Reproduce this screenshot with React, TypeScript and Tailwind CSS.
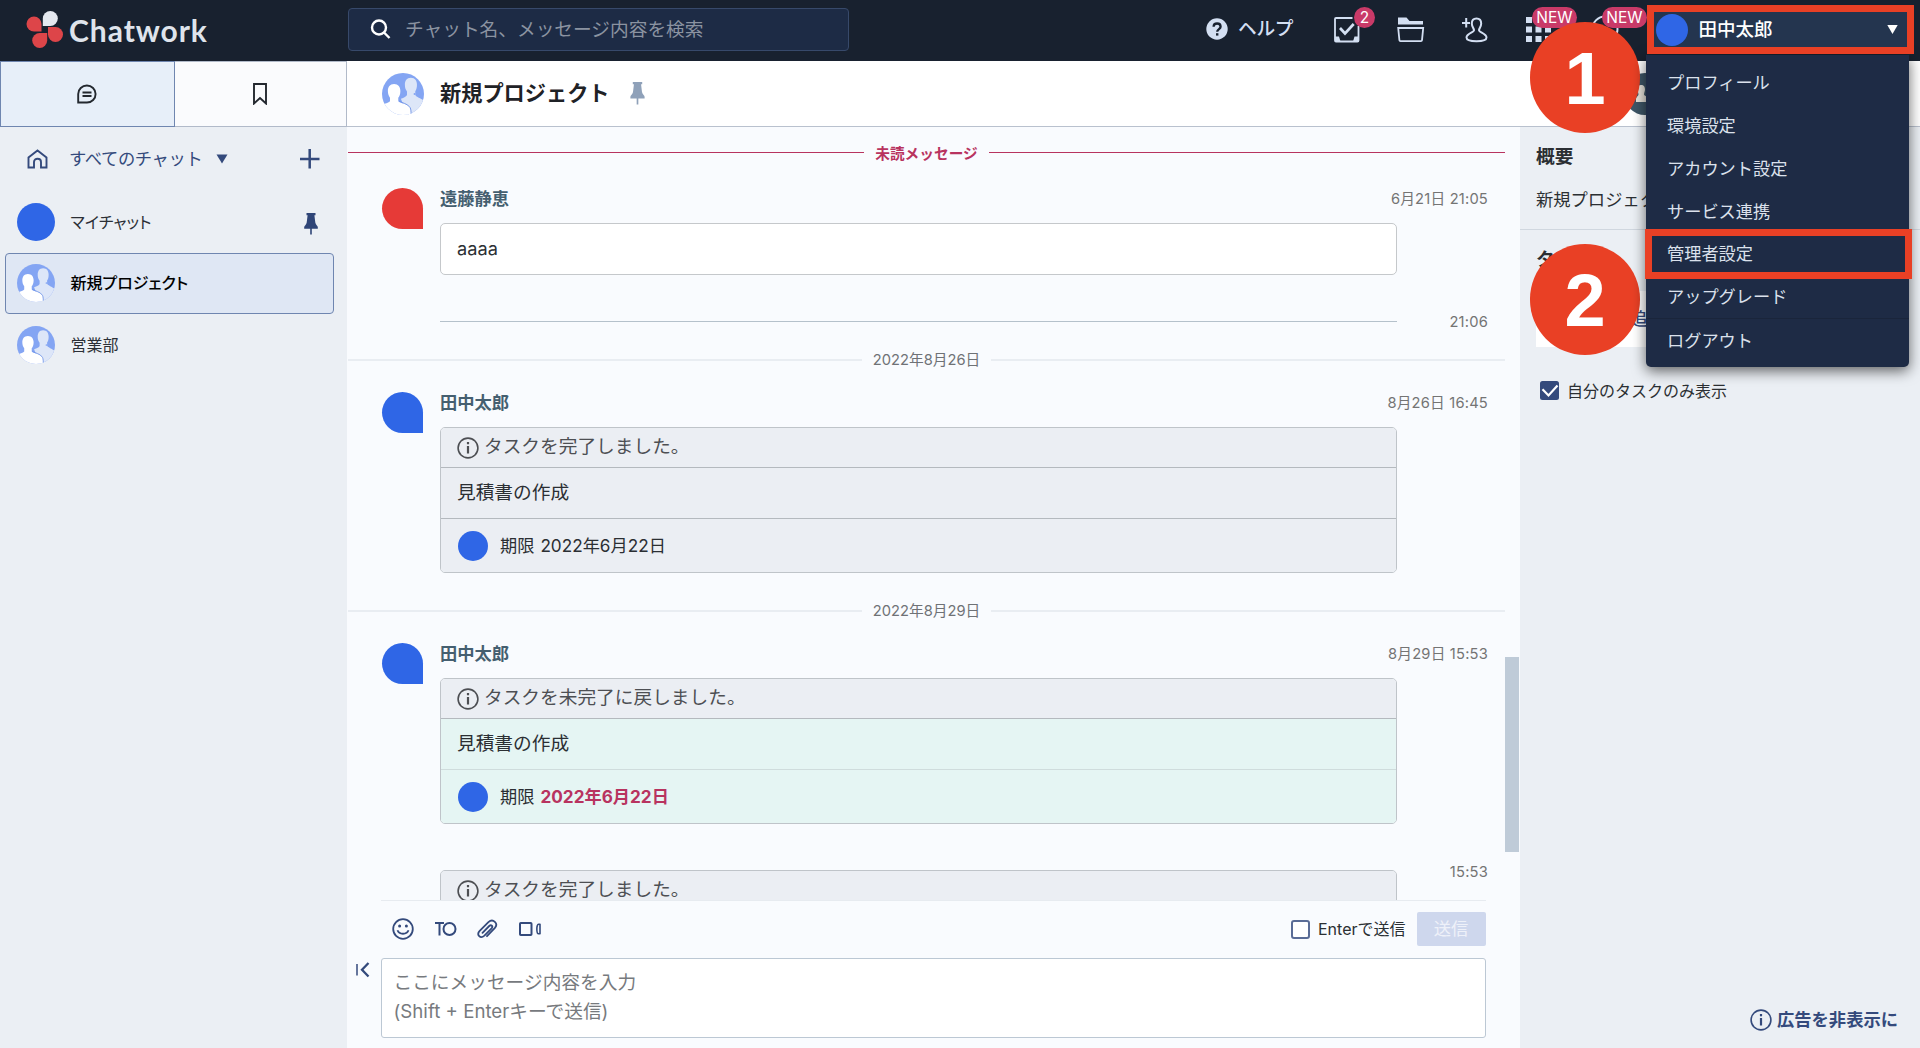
import type { ReactNode } from "react";
import clsx from "clsx";

const menuItems = [
  "プロフィール",
  "環境設定",
  "アカウント設定",
  "サービス連携",
  "管理者設定",
  "アップグレード",
];

const rooms = [
  { id: 1, name: "マイチャット", self: true, pinned: true, active: false },
  { id: 2, name: "新規プロジェクト", self: false, pinned: false, active: true },
  { id: 3, name: "営業部", self: false, pinned: false, active: false },
];

function Logo() {
  // one leaf is a circle with its lower left corner squared off
  const leaf = "M0 15V7.5A7.5 7.5 0 1 1 7.5 15Z";
  return (
    <svg width="38" height="40" viewBox="26 10 38 40">
      <path d={leaf} fill="#e4e8ef" transform="translate(42.8 11)" />
      <path d={leaf} fill="#dd4549" transform="translate(41.5 16.5) scale(-1 1)" />
      <path d={leaf} fill="#dd4549" transform="translate(47.2 48) rotate(180)" />
      <path d={leaf} fill="#dd4549" transform="translate(48 42) scale(1 -1)" />
    </svg>
  );
}

function GroupAvatar({ className }: { className?: string }) {
  return (
    <svg viewBox="0 0 40 40" className={clsx("shrink-0 rounded-full", className)}>
      <rect width="40" height="40" fill="#84a5f3" />
      <path
        d="M27.500 4.500c4 0 5.800 3 5.800 6.700c0 3-.6 4.600-1.600 6.200v3.500c1 2 5 3 8.300 5.500V40H24L18 24.500c3-1 5.300-2 5.800-3.500v-3.500c-1.200-1.600-2-3.200-2-6.300c0-3.700 1.700-6.700 5.700-6.700Z"
        fill="#dde6f8"
      />
      <circle cx="31" cy="20" r="0.900" fill="#84a5f3" />
      <path
        d="M11.500 10.500c4 0 6 3 6 6.700c0 3-.8 5-2 6.300v3.300c1.400 2 9.300 2.600 11.300 6.200c.8 1.600.9 4 .9 7H0V30.500c2.500-1.600 6.500-2.200 7.600-3.700v-3.300c-1.200-1.500-2-3.500-2-6.300c0-3.700 1.900-6.700 5.900-6.700Z"
        fill="#fff"
      />
      <path
        d="M16.200 26.600c1.800 1.800 8.600 2.400 10.600 6.400c.8 1.600.9 4 .9 7"
        fill="none"
        stroke="#6f93e8"
        strokeWidth="0.9"
      />
    </svg>
  );
}

function PinIcon({ className }: { className?: string }) {
  return (
    <svg viewBox="0 0 14 22" className={className} fill="currentColor">
      <path d="M2.500 0h9v2.200h-1.100l.9 7.300c.3 2.200 2.500 3.300 2.500 4.600v1.600H7.800V21.500H6.200V15.700H.2v-1.600c0-1.300 2.200-2.400 2.500-4.600l.9-7.300H2.500Z" />
    </svg>
  );
}

function InfoIcon({ size = 22, className }: { size?: number; className?: string }) {
  return (
    <svg width={size} height={size} viewBox="0 0 22 22" className={className} fill="none" stroke="currentColor">
      <circle cx="11" cy="11" r="9.900" strokeWidth="1.600" />
      <path d="M11 9v7.500" strokeWidth="2.200" />
      <path d="M11 5v2.300" strokeWidth="2.200" />
    </svg>
  );
}

function NewBadge({ className }: { className?: string }) {
  return (
    <span
      className={clsx(
        "absolute flex h-[21px] w-[45px] items-center justify-center rounded-full bg-[#c93a68] text-[15.5px] text-white",
        className
      )}
    >
      NEW
    </span>
  );
}

function Header() {
  return (
    <header className="flex h-[61px] shrink-0 items-start bg-[#18212f] text-[#d3dff2]">
      <div className="flex w-[348px] items-start pl-[26px] pt-[10px]">
        <Logo />
        <span className="ml-[5px] mt-px font-[Lato] text-[30px] leading-[38px] font-bold tracking-[0.95px] text-[#dfe4ec]">
          Chatwork
        </span>
      </div>
      <div className="mt-2 flex h-[43px] w-[501px] items-center rounded-[4px] border-[1.5px] border-[#37496a] bg-[#1d2b45] pl-[21px]">
        <svg width="21" height="21" viewBox="0 0 21 21" fill="none" stroke="#fff" strokeWidth="2.400">
          <circle cx="9" cy="8.500" r="7" />
          <path d="m14 13.500 5.500 5.500" />
        </svg>
        <span className="ml-[14px] pt-px text-[18.7px] text-[#8b93a1]">チャット名、メッセージ内容を検索</span>
      </div>
      <nav className="relative ml-[357px] flex h-[61px] w-[430px]">
        <div className="flex h-[58px] w-[128px] items-center">
          <svg width="22" height="22" viewBox="0 0 22 22">
            <circle cx="11" cy="11" r="10.700" fill="#d3dff2" />
            <path d="M7.600 8.800c0-4.400 7-4.400 7 0c0 2.300-3.400 2.300-3.400 5" fill="none" stroke="#18212f" strokeWidth="2.300" />
            <path d="M10 15.200h2.400v2.400H10z" fill="#18212f" />
          </svg>
          <span className="ml-[10px] pt-px text-[18.7px] font-medium tracking-[-0.3px]">ヘルプ</span>
        </div>
        <svg className="mt-[17px]" width="26" height="26" viewBox="0 0 26 26" fill="none" stroke="currentColor" strokeWidth="1.800">
          <path d="M18.500 1H2q-1 0-1 1v21.500q0 1 1 1h21.500q1 0 1-1V9" />
          <path d="M1 19.500h4l1.500 5H1ZM24.500 19.500h-4l-1.500 5h5.500Z" fill="currentColor" stroke="none" />
          <path d="m6 11 5 5.500 8.700-9.500" strokeWidth="2.700" />
        </svg>
        <svg className="ml-[37px] mt-[17px]" width="28" height="26" viewBox="0 0 28 26" fill="none" stroke="currentColor" strokeWidth="1.800">
          <path d="M1 .5h8.500l3 3.500H26v3.500H1Z" fill="currentColor" stroke="none" />
          <path d="M1.200 11h25l-1.200 12.200q-.1 1-1.100 1H3.500q-1 0-1.100-1Z" />
        </svg>
        <svg className="ml-[37px] mt-[16px]" width="28" height="28" viewBox="0 0 28 28" fill="none" stroke="currentColor" strokeWidth="2">
          <path d="M0 7h8M4.200 2v9.500" />
          <path d="M14.500 2.500c3.200 0 4.700 2.300 4.700 5c0 2.800-1.700 4.500-2.200 6.500c-.6 2.200 7.500 3.200 7.500 7.500c0 2.800-4.500 3.800-10 3.800s-10-1-10-3.800c0-4.300 8.100-5.300 7.500-7.500c-.5-2-2.200-3.700-2.200-6.500c0-2.700 1.500-5 4.700-5Z" />
        </svg>
        <svg className="ml-[36px] mt-[17px]" width="26" height="26" viewBox="0 0 26 26" fill="currentColor">
          {[0, 9.5, 19].map((y) =>
            [0, 9.5, 19].map((x) => <rect key={`${x}-${y}`} x={x} y={y} width="6" height="6" />)
          )}
        </svg>
        <svg className="ml-[39px] mt-[15px]" width="28" height="28" viewBox="0 0 28 28" fill="none" stroke="currentColor" strokeWidth="2">
          <circle cx="14" cy="14" r="12.500" />
        </svg>
        <span className="absolute left-[148px] top-[7px] flex h-[21px] w-[21px] items-center justify-center rounded-full bg-[#c93a68] text-[15.500px] text-white">
          2
        </span>
        <NewBadge className="left-[326px] top-[7px]" />
        <NewBadge className="left-[396px] top-[7px]" />
      </nav>
    </header>
  );
}

function Sidebar() {
  return (
    <aside className="flex w-[347px] shrink-0 flex-col bg-[#ebeff4]">
      <div className="flex h-[65.500px]">
        <div className="flex w-[174.500px] items-center justify-center border-[1.5px] border-[#6f86b0] bg-[#e7eff9]">
          <svg width="20" height="20" viewBox="0 0 20 20" fill="none" stroke="#23282f" strokeWidth="1.900">
            <path d="M1.200 18.500V10A8.700 8.500 0 1 1 10 18.500Z" />
            <path d="M5.500 8.500h9M5.500 12h9" />
          </svg>
        </div>
        <div className="flex flex-1 items-center justify-center border-y-[1.5px] border-r-[1.5px] border-[#b1bac9] bg-[#fafbfd]">
          <svg width="14" height="22" viewBox="0 0 14 22" fill="none" stroke="#23282f" strokeWidth="1.900">
            <path d="M1 1h12v19.500l-6-5.500-6 5.500Z" />
          </svg>
        </div>
      </div>
      <div className="flex h-[64px] items-center pl-[27px] text-[#344a7c]">
        <svg width="21" height="20" viewBox="0 0 21 20" fill="none" stroke="currentColor" strokeWidth="1.900">
          <path d="M1.500 18.500V8.500l9-7 9 7v10h-5.500V13c0-4.300-7-4.300-7 0v5.500Z" />
        </svg>
        <span className="ml-[21px] w-[136px] text-[17.300px] tracking-[-0.35px] whitespace-nowrap">すべてのチャット</span>
        <svg className="ml-[11px]" width="12" height="10" viewBox="0 0 12 10" fill="currentColor">
          <path d="M.5.500h11L6 9.500Z" />
        </svg>
        <svg className="ml-[72px]" width="20" height="20" viewBox="0 0 20 20" stroke="currentColor" strokeWidth="2.500">
          <path d="M0 10h19.500M9.700 0v19.500" />
        </svg>
      </div>
      <ul className="pl-[5px] pt-[0.500px] text-[16px] text-[#2b2f36] [font-feature-settings:'palt']">
        {rooms.map((room) => (
          <li
            key={room.id}
            className={clsx(
              "flex h-[61.5px] w-[328.500px] items-center rounded-[4px] border-[1.5px] pl-[10.500px]",
              room.active ? "border-[#6f86b0] bg-[#dfe7f4] font-medium text-black" : "border-transparent"
            )}
          >
            {room.self ? (
              <span className="h-[38px] w-[38px] rounded-full bg-[#2f66e6]" />
            ) : (
              <GroupAvatar className="h-[38px] w-[38px]" />
            )}
            <span className="ml-4 flex-1">{room.name}</span>
            {room.pinned && <PinIcon className="mr-[15px] mt-1 h-[22px] w-[14px] text-[#2f4577]" />}
          </li>
        ))}
      </ul>
    </aside>
  );
}

function Divider({ children, unread }: { children: ReactNode; unread?: boolean }) {
  const line = clsx("flex-1", unread ? "relative -top-[2px] h-px bg-[#b8335f]" : "h-[1.500px] bg-[#e9edf2]");
  return (
    <div
      className={clsx(
        "ml-px flex h-[54px] w-[1157px] items-center gap-[11px] text-[14.700px]",
        unread ? "font-bold text-[#b8335f]" : "text-[#6f7276]"
      )}
    >
      <div className={line} />
      <span>{children}</span>
      <div className={line} />
    </div>
  );
}

function Message({ name, time, red, children }: { name: string; time: string; red?: boolean; children: ReactNode }) {
  return (
    <div className="flex pl-[35px] pt-1">
      <div
        className={clsx(
          "mt-[0.500px] h-[41px] w-[41px] shrink-0 rounded-full rounded-br-none",
          red ? "bg-[#e63a37]" : "bg-[#2f66e6]"
        )}
      />
      <div className="ml-[17px] w-[1048px]">
        <div className="flex h-[24px] items-center justify-between">
          <span className="text-[17.300px] font-bold text-[#455f70]">{name}</span>
          <span className="text-[14.700px] tracking-[0.2px] text-[#747474]">{time}</span>
        </div>
        <div className="mt-3 w-[957px]">{children}</div>
      </div>
    </div>
  );
}

function TaskHeading({ children }: { children: ReactNode }) {
  return (
    <div className="flex h-[39px] items-center bg-[#ebeef3] pl-[16px] text-[#4d4f53]">
      <InfoIcon />
      <span className="ml-[5px] text-[18.700px]">{children}</span>
    </div>
  );
}

function TaskCard({ heading, open }: { heading: string; open?: boolean }) {
  return (
    <div className="h-[146px] overflow-hidden rounded-[5px] border-[1.5px] border-[#bfc4c9] text-[#2b2f33]">
      <TaskHeading>{heading}</TaskHeading>
      <div className={open ? "bg-[#e5f5f3]" : "bg-[#ebeef3]"}>
        <div className="flex h-[51px] items-center border-t-[1.5px] border-[#b4b9be] pl-[16px] text-[18.700px]">
          見積書の作成
        </div>
        <div
          className={clsx(
            "flex h-[55px] items-center border-t-[1.5px] pb-px pl-[17px] text-[17.200px]",
            open ? "border-[#cfdcdc]" : "border-[#b4b9be]"
          )}
        >
          <span className="mr-3 h-[30px] w-[30px] rounded-full bg-[#2f66e6]" />
          <span className="mr-[6px]">期限</span>
          <span className={open ? "font-bold text-[#b8335f]" : ""}>2022年6月22日</span>
        </div>
      </div>
    </div>
  );
}

function Timeline() {
  return (
    <div className="flex h-[773px] shrink-0 overflow-hidden">
      <div className="w-[1158px]">
        <Divider unread>未読メッセージ</Divider>
        <div className="pt-[2px]">
          <Message name="遠藤静恵" time="6月21日 21:05" red>
            <div className="flex h-[52px] items-center rounded-[5px] border-[1.5px] border-[#c5c8cb] bg-white pl-[16px] text-[18.200px] text-[#2b2f33]">
              aaaa
            </div>
          </Message>
        </div>
        <div className="mt-[37px] flex h-[21px] w-[1141px] items-center justify-between pl-[93px] text-[14.700px] tracking-[0.2px] text-[#747474]">
          <div className="mb-[2px] h-[1.500px] w-[957px] bg-[#b5c1cb]" />
          <span>21:06</span>
        </div>
        <Divider>2022年8月26日</Divider>
        <Message name="田中太郎" time="8月26日 16:45">
          <TaskCard heading="タスクを完了しました。" />
        </Message>
        <div className="pt-[11px]">
          <Divider>2022年8月29日</Divider>
        </div>
        <Message name="田中太郎" time="8月29日 15:53">
          <TaskCard heading="タスクを未完了に戻しました。" open />
        </Message>
        <div className="mt-[36px] flex w-[1141px] items-start justify-between pl-[93px]">
          <div className="mt-[10px] h-[80px] w-[957px] overflow-hidden rounded-[5px] border-[1.5px] border-[#bfc4c9] bg-[#ebeef3]">
            <TaskHeading>タスクを完了しました。</TaskHeading>
          </div>
          <span className="mt-px text-[14.700px] tracking-[0.2px] text-[#747474]">15:53</span>
        </div>
      </div>
      <div className="mt-[530px] h-[195px] w-[13.500px] bg-[#bfcbd8]" />
    </div>
  );
}

function Composer() {
  return (
    <div className="flex flex-1">
      <div className="w-[34px] pl-[9px] pt-[62px]">
        <svg width="14" height="16" viewBox="0 0 14 16" fill="none" stroke="#344a7c">
          <path d="M1 2v11.500" strokeWidth="1.500" />
          <path d="m12.500 1-6.500 6.700 6.500 6.800" strokeWidth="2.300" />
        </svg>
      </div>
      <div className="w-[1104.500px] border-t border-[#e7ebf0]">
        <div className="flex h-[56.500px] items-center pl-[11px] text-[#344a7c]">
          <svg width="22" height="22" viewBox="0 0 22 22" fill="none" stroke="currentColor" strokeWidth="1.800">
            <circle cx="11" cy="11" r="9.800" />
            <path d="M5.500 12.300c1.500 4.600 9.500 4.600 11 0" />
            <circle cx="7.600" cy="8" r="1.500" fill="currentColor" stroke="none" />
            <circle cx="14.400" cy="8" r="1.500" fill="currentColor" stroke="none" />
          </svg>
          <svg className="ml-[21px]" width="22" height="16" viewBox="0 0 22 16" fill="none" stroke="currentColor" strokeWidth="2">
            <path d="M0 2h9M4.500 2v12.500" />
            <circle cx="14.500" cy="8" r="6" />
          </svg>
          <svg className="ml-[20px]" width="21" height="21" viewBox="0 0 21 21" fill="none" stroke="currentColor" strokeWidth="1.800" strokeLinecap="round">
            <path d="M5.500 13.800 12.200 7c2-1.800 4.200.4 2.400 2.300L7.400 16.600c-4 3.600-8.300-.8-4.700-4.700L11.400 3.200c4.600-4.200 10.500 1.300 6.300 6L10 17.200" />
          </svg>
          <svg className="ml-[21px]" width="23" height="14" viewBox="0 0 23 14" fill="none" stroke="currentColor" strokeWidth="2">
            <rect x="1" y="1" width="11.500" height="12" rx="0.800" />
            <path d="M21 2.300v9.400h-1.500c-2.200 0-2.200-9.400 0-9.400Z" strokeWidth="1.600" strokeLinejoin="round" />
          </svg>
          <label className="ml-auto flex items-center text-[16px] text-[#2b2f33]">
            <span className="mr-[8px] h-[19px] w-[19px] rounded-[3px] border-2 border-[#5a6c96] bg-white" />
            Enterで送信
          </label>
          <button className="ml-[11px] h-[34px] w-[69px] rounded-[2px] bg-[#ced7ed] text-[17.300px] text-[#eef1f9]">送信</button>
        </div>
        <div className="h-[80px] rounded-[3px] border-[1.5px] border-[#bcc8d4] bg-white pl-[11.500px] pt-[10.500px] text-[18.700px] leading-[28.500px] text-[#777a7e]">
          ここにメッセージ内容を入力
          <br />
          (Shift + Enterキーで送信)
        </div>
      </div>
    </div>
  );
}

function RoomPanel() {
  return (
    <aside className="flex flex-1 flex-col bg-[#ebeff4] text-[#2b2f33]">
      <section className="h-[102.500px] border-b-[1.5px] border-[#d0d7df] pl-4 pt-[16px] whitespace-nowrap">
        <h2 className="text-[18.700px] leading-[28px] font-bold">概要</h2>
        <p className="mt-4 text-[17.300px] leading-[26px]">新規プロジェクト</p>
      </section>
      <section className="pl-4 pt-[16px]">
        <h2 className="text-[18.700px] leading-[28px] font-bold">タスク</h2>
        <div className="mt-[17px] flex h-[56px] w-[360px] items-center bg-white pl-2 text-[17.300px] font-medium text-[#344a7c]">
          <svg width="16" height="16" viewBox="0 0 16 16" stroke="currentColor" strokeWidth="2">
            <path d="M0 8h16M8 0v16" />
          </svg>
          <span className="ml-[1px]">タスクを追加</span>
        </div>
        <label className="ml-1 mt-[32px] flex items-center text-[16px] leading-[24px]">
          <svg className="mr-[8px]" width="19" height="19" viewBox="0 0 19 19">
            <rect width="19" height="19" rx="2.500" fill="#344a7c" />
            <path d="m2.500 8.300 6 6.200 9-10" fill="none" stroke="#fff" strokeWidth="2.200" />
          </svg>
          自分のタスクのみ表示
        </label>
      </section>
      <div className="mt-auto flex items-center pb-[15px] pl-[230px] text-[#344a7c]">
        <InfoIcon />
        <span className="ml-[5px] text-[17.300px] leading-[26px] font-bold">広告を非表示に</span>
      </div>
    </aside>
  );
}

function AccountMenu() {
  return (
    <>
      <div className="absolute left-[1645.500px] top-[55px] z-10 h-[312px] w-[263.500px] rounded-b-[5px] bg-[#1e2b45] pt-[7px] text-[17.200px] text-[#dbe1ec] shadow-[0_4px_14px_rgba(0,0,0,0.6)]">
        {menuItems.map((item) => (
          <div key={item} className="flex h-[42.700px] items-center pl-[21.500px]">
            {item}
          </div>
        ))}
        <div className="flex h-[44px] items-center border-t border-[#1a253b] pl-[21.500px]">ログアウト</div>
      </div>
      <div className="absolute left-[1646.500px] top-[5px] z-20 flex h-[49px] w-[267px] items-center border-[7px] border-[#e94025] bg-[#24354f] text-white">
        <span className="ml-[2px] h-[32px] w-[32px] rounded-full bg-[#2f66e6]" />
        <span className="ml-[11px] flex-1 pt-px text-[18.500px] font-medium">田中太郎</span>
        <svg className="mr-[9px]" width="11" height="9" viewBox="0 0 11 9" fill="#fff">
          <path d="M.3 0h10.400L5.500 9Z" />
        </svg>
      </div>
      <div className="absolute left-[1645px] top-[229px] z-20 h-[50px] w-[267px] border-[7px] border-[#e94025]" />
    </>
  );
}

function Step({ n, className }: { n: number; className: string }) {
  return (
    <div
      className={clsx(
        "absolute left-[1530px] flex h-[111px] w-[110px] items-center justify-center rounded-full bg-[#e94025] pt-[2px] font-['Liberation_Sans'] text-[74px] font-bold text-white",
        className
      )}
    >
      {n}
    </div>
  );
}

export default function App() {
  return (
    <div className="relative flex h-screen w-full flex-col overflow-hidden bg-[#f9fbfe] font-[Inter,'Noto_Sans_CJK_JP',sans-serif] leading-normal">
      <Header />
      <div className="flex flex-1">
        <Sidebar />
        <div className="flex flex-1 flex-col">
          <div className="flex h-[66px] shrink-0 items-center border-b-[1.5px] border-[#b9c1ce] bg-white pl-[35px]">
            <GroupAvatar className="h-[42px] w-[42px]" />
            <h1 className="ml-4 text-[21.200px] font-bold text-[#1f2226]">新規プロジェクト</h1>
            <PinIcon className="ml-[20px] h-[23px] w-[15px] text-[#8fa1b9]" />
            <div className="ml-auto mr-[254px] flex h-[42px] w-[42px] items-center justify-center rounded-full bg-[#3e5667]">
              <svg width="26" height="20" viewBox="0 0 26 20" fill="#e8e4dc">
                <path d="M9 1c3 0 4 2 4 4.500c0 2-1 3-1 5c0 1.500 5 2 5 5V18H4v-2.500c0-3 2.500-3.500 2.500-5c0-2-1-3-1-5C5.500 3 6.500 1 9 1Z" />
                <path d="M18 3c3 0 4 2 4 4c0 2-1 3-1 4.500c0 1 4 1.500 4 4V18h-6.500v-3c0-2-2.500-3-3.500-4.500C14 7 14.500 3 18 3Z" />
              </svg>
            </div>
          </div>
          <div className="flex flex-1">
            <main className="flex w-[1173px] shrink-0 flex-col">
              <Timeline />
              <Composer />
            </main>
            <RoomPanel />
          </div>
        </div>
      </div>
      <Step n={1} className="top-[22px]" />
      <Step n={2} className="top-[244px]" />
      <AccountMenu />
    </div>
  );
}
